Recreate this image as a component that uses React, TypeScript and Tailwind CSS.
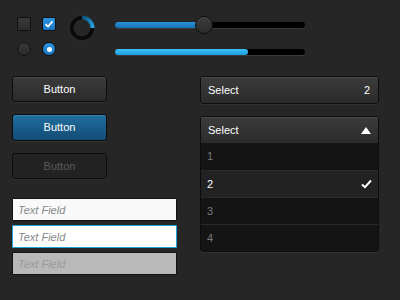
import React from 'react';

const font = { fontFamily: '"Liberation Sans", Arial, sans-serif' };

const Spinner: React.FC = () => (
    <svg width="26" height="26" viewBox="0 0 26 26" className="mt-[-2px] ml-[13px]">
        <defs>
            <linearGradient id="arc" x1="0" y1="0" x2="1" y2="1">
                <stop offset="0" stopColor="#0f4f7a" />
                <stop offset="1" stopColor="#25a9e8" />
            </linearGradient>
        </defs>
        <circle cx="13" cy="13" r="10.5" fill="none" stroke="#0a0a0a" strokeWidth="4" />
        <circle cx="13" cy="13" r="12.7" fill="none" stroke="#333" strokeWidth="0.6" />
        <path d="M13 2.5 A10.5 10.5 0 0 1 23.5 13" fill="none" stroke="url(#arc)" strokeWidth="4" />
    </svg>
);

const Slider: React.FC<{ value: number; knob?: boolean; light?: boolean }> = ({ value, knob, light }) => (
    <div className="relative h-[6px] w-[190px] rounded-full bg-black shadow-[0_1px_0_#3a3a3a]">
        <div
            className={
                light
                    ? 'h-full rounded-full bg-gradient-to-b from-[#3cc0f5] to-[#1c9ee0]'
                    : 'h-full rounded-full bg-gradient-to-b from-[#2a92d8] to-[#1770b4]'
            }
            style={{ width: value }}
        />
        {knob && (
            <div
                className="absolute top-1/2 h-[18px] w-[18px] -translate-y-1/2 -translate-x-1/2 rounded-full border border-[#0d0d0d] bg-gradient-to-b from-[#3d3d3d] to-[#2b2b2b] shadow-[inset_0_1px_0_#4a4a4a]"
                style={{ left: value + 5 }}
            />
        )}
    </div>
);

const SelectHeader: React.FC<{ children: React.ReactNode }> = ({ children }) => (
    <div className="flex h-[26px] items-center justify-between bg-gradient-to-b from-[#3c3c3c] to-[#2b2b2b] pl-[7px] pr-[8px] text-[11px] text-white shadow-[inset_0_1px_0_#4a4a4a]">
        {children}
    </div>
);

const App: React.FC = () => {
    const rows = ['1', '2', '3', '4'];

    return (
        <div className="h-[300px] w-[400px] overflow-hidden bg-[#262626]" style={font}>
            {/* Top controls */}
            <div className="flex items-start pl-[17px] pt-[17px]">
                <div className="grid grid-cols-2 gap-[11px]">
                    <div className="h-[14px] w-[14px] rounded-[2px] border border-[#111] bg-gradient-to-b from-[#3a3a3a] to-[#2c2c2c]" />
                    <div className="flex h-[14px] w-[14px] items-center justify-center rounded-[2px] border border-[#111] bg-gradient-to-b from-[#2e95e0] to-[#1876c4]">
                        <svg width="10" height="10" viewBox="0 0 10 10">
                            <path d="M1.5 5.2 L4 7.6 L8.6 2.4" fill="none" stroke="#fff" strokeWidth="1.7" />
                        </svg>
                    </div>
                    <div className="h-[14px] w-[14px] rounded-full border border-[#111] bg-gradient-to-b from-[#363636] to-[#2a2a2a]" />
                    <div className="flex h-[14px] w-[14px] items-center justify-center rounded-full border border-[#111] bg-gradient-to-b from-[#2e95e0] to-[#1876c4]">
                        <div className="h-[5px] w-[5px] rounded-full bg-white" />
                    </div>
                </div>
                <Spinner />
                <div className="ml-[20px] flex flex-col gap-[21px] pt-[5px]">
                    <Slider value={84} knob />
                    <Slider value={133} light />
                </div>
            </div>

            <div className="mt-[20px] flex pl-[12px]">
                {/* Left column */}
                <div className="flex w-[165px] flex-col">
                    <div className="flex w-[95px] flex-col gap-[12px] text-[11px]">
                        <button className="h-[26px] rounded-[3px] border border-[#0d0d0d] bg-gradient-to-b from-[#3c3c3c] to-[#2a2a2a] text-white shadow-[inset_0_1px_0_#4a4a4a,0_1px_0_#333]">
                            Button
                        </button>
                        <button className="h-[27px] rounded-[3px] border border-[#0d0d0d] bg-gradient-to-b from-[#216f9f] to-[#124c76] text-white shadow-[inset_0_1px_0_#3580b0,0_1px_0_#333]">
                            Button
                        </button>
                        <button className="h-[26px] rounded-[3px] border border-[#0d0d0d] bg-[#222] text-[#5a5a5a] shadow-[0_1px_0_#2f2f2f]">
                            Button
                        </button>
                    </div>
                    <div className="mt-[19px] flex flex-col gap-[4px] text-[11px] italic">
                        <input
                            placeholder="Text Field"
                            className="h-[23px] rounded-[1px] border border-[#111] bg-[#f9f9f9] px-[5px] outline-none placeholder:text-[#888]"
                        />
                        <input
                            placeholder="Text Field"
                            className="h-[23px] rounded-[1px] border border-[#1ea3dc] bg-white px-[5px] outline-none placeholder:text-[#888]"
                        />
                        <input
                            disabled
                            placeholder="Text Field"
                            className="h-[23px] rounded-[1px] border border-[#111] bg-[#b9b9b9] px-[5px] outline-none placeholder:text-[#9a9a9a]"
                        />
                    </div>
                </div>

                {/* Right column */}
                <div className="ml-[23px] flex w-[179px] flex-col gap-[12px]">
                    <div className="overflow-hidden rounded-[3px] border border-[#0d0d0d] shadow-[0_1px_0_#333]">
                        <SelectHeader>
                            <span>Select</span>
                            <span>2</span>
                        </SelectHeader>
                    </div>
                    <div className="overflow-hidden rounded-[3px] border border-[#0d0d0d] shadow-[0_1px_0_#333]">
                        <SelectHeader>
                            <span>Select</span>
                            <svg width="10" height="7" viewBox="0 0 10 7" className="mr-[-1px]">
                                <path d="M0 7 L5 0 L10 7 Z" fill="#fff" />
                            </svg>
                        </SelectHeader>
                        {rows.map((r, i) => (
                            <div
                                key={r}
                                className={
                                    r === '2'
                                        ? 'flex h-[27px] items-center justify-between border-t border-[#2a2a2a] bg-[#222] pl-[6px] pr-[6px] text-[11px] text-white'
                                        : i === 0
                                        ? 'flex h-[27px] items-center bg-[#141414] pl-[6px] text-[11px] text-[#7a7a7a]'
                                        : 'flex h-[27px] items-center border-t border-[#2a2a2a] bg-[#141414] pl-[6px] text-[11px] text-[#7a7a7a]'
                                }
                            >
                                <span>{r}</span>
                                {r === '2' && (
                                    <svg width="11" height="10" viewBox="0 0 11 10">
                                        <path d="M1 5.5 L4 8.2 L10 1.5" fill="none" stroke="#fff" strokeWidth="2" />
                                    </svg>
                                )}
                            </div>
                        ))}
                    </div>
                </div>
            </div>
        </div>
    );
};

export default App;
